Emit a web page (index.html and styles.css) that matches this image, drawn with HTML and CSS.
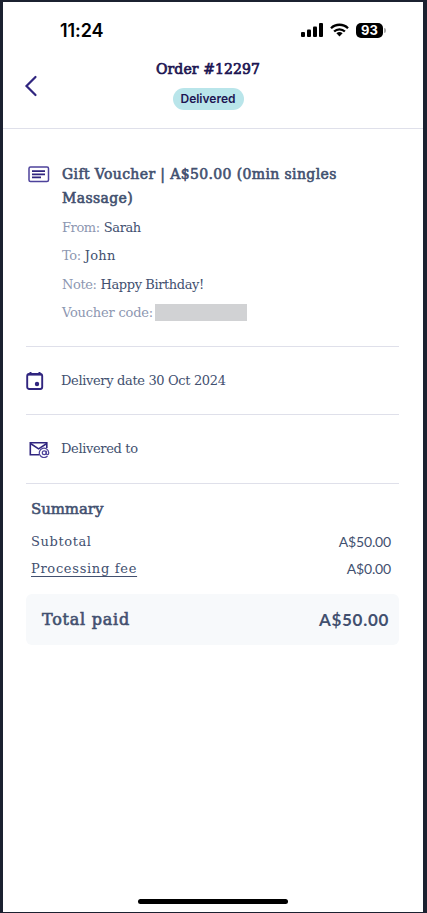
FILE: index.html
```html
<!DOCTYPE html>
<html lang="en">
<head>
<meta charset="utf-8">
<title>Order #12297</title>
<link rel="stylesheet" href="styles.css">
</head>
<body>
<div class="screen">
  <div class="status">
    <span class="clock">11:24</span>
    <div class="indicators">
      <svg class="signal" width="22" height="14" viewBox="0 0 22 14"><rect x="0" y="9" width="4" height="5" rx="1"/><rect x="6" y="6.500" width="4" height="7.500" rx="1"/><rect x="12" y="3.500" width="4" height="10.500" rx="1"/><rect x="18" y="0" width="4" height="14" rx="1"/></svg>
      <svg class="wifi" width="19" height="14" viewBox="0 0 19 14"><g fill="none" stroke="#000" stroke-width="2.300"><path d="M1 5.200a12.200 12.200 0 0 1 17 0"/><path d="M4.100 8.500a7.700 7.700 0 0 1 10.800 0"/></g><path d="M6.400 10.300a4.600 4.600 0 0 1 6.200 0L9.500 13.600z"/></svg>
      <span class="battery">93</span><span class="cap"></span>
    </div>
  </div>
  <header class="header">
    <svg class="back" width="14" height="22" viewBox="0 0 14 22"><path d="M11.500 2 2.500 11l9 9"/></svg>
    <div class="heading">
      <h1>Order #12297</h1>
      <span class="badge">Delivered</span>
    </div>
  </header>
  <main class="content">
    <section class="voucher">
      <svg class="icon" width="22" height="17" viewBox="0 0 22 17"><rect x="1" y="1" width="19.500" height="14.500" rx="1.500" fill="none" stroke="#4d429b" stroke-width="1.500"/><path d="M4 5.200h13M4 8.300h13M4 11.400h9" stroke="#30257f" stroke-width="1.800"/></svg>
      <div>
        <h2>Gift Voucher | A$50.00 (0min singles<br>Massage)</h2>
        <p><span class="label">From:</span><span>Sarah</span></p>
        <p><span class="label">To:</span><span class="to">John</span></p>
        <p><span class="label">Note:</span><span>Happy Birthday!</span></p>
        <p><span class="label code">Voucher code:</span><span class="redacted"></span></p>
      </div>
    </section>
    <section class="row">
      <svg class="icon" width="18" height="20" viewBox="0 0 18 20"><path d="M4.500 1v3M13.500 1v3" stroke="#30257f" stroke-width="2"/><rect x="1.200" y="3" width="15" height="15" rx="2" fill="none" stroke="#30257f" stroke-width="1.900"/><path d="M2 3.500h13.400" stroke="#30257f" stroke-width="2.200"/><circle cx="11" cy="13" r="2.200" fill="#30257f"/></svg>
      <span>Delivery date 30 Oct 2024</span>
    </section>
    <section class="row sent">
      <svg class="icon" width="21" height="17" viewBox="0 0 21 17"><path d="M10 13.800H1.300V1.700h16.500V7" fill="none" stroke="#30257f" stroke-width="1.600"/><path d="m1.500 2.500 8.100 5.300 8.200-5.300" fill="none" stroke="#30257f" stroke-width="1.500"/><g fill="none" stroke="#4d429b" stroke-width="1.200"><path d="M18.500 15a4.700 4.700 0 1 1 1.200-3.400v.7c0 1.700-2.400 1.700-2.400 0V9.800"/><circle cx="15.200" cy="11.700" r="1.900"/></g></svg>
      <span>Delivered to</span>
    </section>
    <section class="summary">
      <h3>Summary</h3>
      <div class="line"><span class="sub">Subtotal</span><span class="amount">A$50.00</span></div>
      <div class="line"><span class="fee">Processing fee</span><span class="amount">A$0.00</span></div>
    </section>
    <div class="total"><span class="paid">Total paid</span><span class="sum">A$50.00</span></div>
  </main>
  <div class="home"></div>
</div>
</body>
</html>
```
FILE: styles.css
```css
* { box-sizing: border-box; }
body { margin: 0; background: #1b2130; font-family: "DejaVu Serif", serif; color: #42506f; }
h1, h2, h3, p { margin: 0; font-weight: 400; white-space: nowrap; }
svg { display: block; flex: none; }
span { white-space: nowrap; }
.screen { display: flex; flex-direction: column; width: 420px; height: 910px; margin: 2px 4px 1px 3px; background: #fff; }
.status { display: flex; justify-content: space-between; height: 53px; padding: 18px 37px 0 57px; color: #000; }
.clock { font: 600 18px/22px Inter, sans-serif; letter-spacing: -0.1px; }
.indicators { display: flex; align-items: center; height: 20px; }
.wifi { margin-left: 7px; }
.battery { margin-left: 7px; width: 27px; height: 15px; border-radius: 5px; background: #000; color: #fff; font: 700 13px/15px Inter, sans-serif; text-align: center; }
.cap { width: 2px; height: 5px; margin-left: 1px; border-radius: 0 2px 2px 0; background: #aaa; }
.header { display: flex; flex: none; height: 74px; border-bottom: 1px solid #dfe0ea; }
.back { margin: 20px 0 0 21px; }
.back path { fill: none; stroke: #30257f; stroke-width: 2.2; stroke-linecap: round; }
.heading { display: flex; flex-direction: column; align-items: center; width: 340px; }
h1 { margin-top: 3px; font-size: 14px; line-height: 22px; letter-spacing: 0.1px; color: #1d1552; -webkit-text-stroke: 0.7px; }
.badge { margin-top: 8px; width: 71px; height: 22px; border-radius: 11px; background: #b9e5ea; color: #1d1552; font: 600 12px/22px Inter, sans-serif; text-align: center; }
.content { padding: 0 24px 0 23px; }
.voucher { display: flex; height: 218px; padding-top: 33px; border-bottom: 1px solid #dfe0ea; }
.voucher .icon { margin: 4px 12px 0 2px; }
h2 { font-size: 14px; line-height: 24px; letter-spacing: 0.37px; -webkit-text-stroke: 0.6px; }
.voucher p { display: flex; align-items: center; height: 28.3px; font-size: 13px; line-height: 28px; letter-spacing: -0.4px; }
.voucher h2 + p { margin-top: 4px; }
.label { color: #8d97b1; margin-right: 4px; }
.voucher .to { letter-spacing: 0.3px; }
.voucher .code { margin-right: 2px; letter-spacing: -0.2px; }
.redacted { width: 92px; height: 17px; margin-top: -2px; background: #d1d2d4; }
.row { display: flex; align-items: center; height: 68px; border-bottom: 1px solid #dfe0ea; font-size: 13px; letter-spacing: -0.35px; }
.row .icon { margin-right: 17px; }
.sent { height: 69px; }
.sent .icon { margin: 0 11px 0 3px; }
.sent span { margin-top: -2px; }
.summary { padding: 13px 8px 0 5px; height: 110px; font-size: 13px; }
h3 { font-size: 15px; line-height: 24px; margin-bottom: 8px; letter-spacing: -0.1px; -webkit-text-stroke: 0.55px; }
.line { display: flex; justify-content: space-between; height: 26.5px; line-height: 26px; }
.sub { letter-spacing: 0.6px; }
.fee { letter-spacing: 0.7px; text-decoration: underline; text-underline-offset: 3px; }
.amount, .sum { font-family: Lato, sans-serif; }
.amount { font-size: 14px; line-height: 25px; letter-spacing: -0.15px; }
.total { display: flex; justify-content: space-between; align-items: center; height: 51px; padding: 0 10px 0 16px; border-radius: 6px; background: #f7f9fb; font-size: 16px; }
.paid { -webkit-text-stroke: 0.6px; letter-spacing: 0.75px; }
.sum { font-size: 17px; font-weight: 700; letter-spacing: 0.7px; }
.home { width: 150px; height: 5px; margin: auto auto 8px 135px; border-radius: 3px; background: #000; }
```
